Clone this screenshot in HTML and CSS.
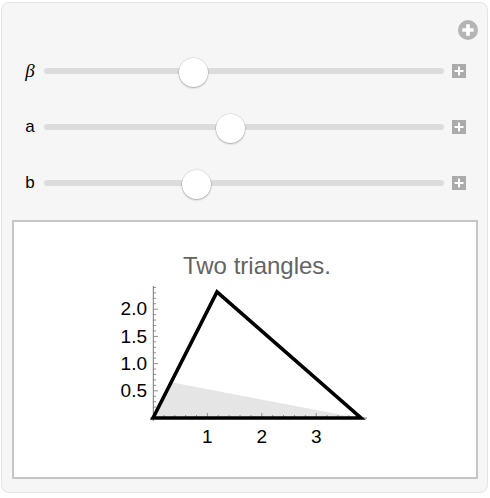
FILE: index.html
```html
<!DOCTYPE html>
<html>
<head>
<meta charset="utf-8">
<link rel="stylesheet" href="styles.css">
</head>
<body>
<div class="panel">
  <div class="top">
    <svg class="addc" width="20" height="20" viewBox="0 0 20 20"><circle cx="10" cy="10" r="10" fill="#b4b4b4"/><path d="M10 4.3V15.7M4.3 10H15.7" stroke="#fff" stroke-width="3.6"/></svg>
  </div>
  <div class="row">
    <span class="lab greek">β</span>
    <div class="track"><span class="thumb" style="left:37.25%"></span></div>
    <svg class="plus" width="14" height="14" viewBox="0 0 14 14"><rect width="14" height="14" fill="#ababab"/><path d="M7 2.5V11.5M2.5 7H11.5" stroke="#fff" stroke-width="2"/></svg>
  </div>
  <div class="row">
    <span class="lab">a</span>
    <div class="track"><span class="thumb" style="left:46.5%"></span></div>
    <svg class="plus" width="14" height="14" viewBox="0 0 14 14"><rect width="14" height="14" fill="#ababab"/><path d="M7 2.5V11.5M2.5 7H11.5" stroke="#fff" stroke-width="2"/></svg>
  </div>
  <div class="row">
    <span class="lab">b</span>
    <div class="track"><span class="thumb" style="left:38%"></span></div>
    <svg class="plus" width="14" height="14" viewBox="0 0 14 14"><rect width="14" height="14" fill="#ababab"/><path d="M7 2.5V11.5M2.5 7H11.5" stroke="#fff" stroke-width="2"/></svg>
  </div>
  <div class="plot">
    <svg class="chart" width="462" height="255" viewBox="14 222 462 255">
      <text class="title" x="257" y="273.5" text-anchor="middle">Two triangles.</text>
      <polygon points="153,418 172.5,382.5 358,418" fill="#e5e5e5"/>
      <path d="M153.3 286V421M150 418H367" stroke="#777" stroke-width="1" fill="none"/>
      <path stroke="#777" stroke-width="0.8" fill="none" d="
        M153 412.56h3M153 407.12h3M153 401.68h3M153 396.24h3M153 390.8h5
        M153 385.36h3M153 379.92h3M153 374.48h3M153 369.04h3M153 363.6h5
        M153 358.16h3M153 352.72h3M153 347.28h3M153 341.84h3M153 336.4h5
        M153 330.96h3M153 325.52h3M153 320.08h3M153 314.64h3M153 309.2h5
        M153 303.76h3M153 298.32h3M153 292.88h3M153 287.44h3
        M163.88 418v-3M174.76 418v-3M185.64 418v-3M196.52 418v-3M207.4 418v-5
        M218.28 418v-3M229.16 418v-3M240.04 418v-3M250.92 418v-3M261.8 418v-5
        M272.68 418v-3M283.56 418v-3M294.44 418v-3M305.32 418v-3M316.2 418v-5
        M327.08 418v-3M337.96 418v-3M348.84 418v-3M359.72 418v-3"/>
      <polygon points="153,418 217,292 361,418" fill="none" stroke="#000" stroke-width="3.6" stroke-linejoin="miter"/>
      <g class="tick">
        <text x="147" y="315" text-anchor="end">2.0</text>
        <text x="147" y="342.5" text-anchor="end">1.5</text>
        <text x="147" y="369.5" text-anchor="end">1.0</text>
        <text x="147" y="396.5" text-anchor="end">0.5</text>
        <text x="207.4" y="442.5" text-anchor="middle">1</text>
        <text x="261.8" y="442.5" text-anchor="middle">2</text>
        <text x="316.2" y="442.5" text-anchor="middle">3</text>
      </g>
    </svg>
  </div>
</div>
</body>
</html>
```
FILE: styles.css
```css
html, body {
  margin: 0;
  padding: 0;
  background: #ffffff;
}
body {
  font-family: "Liberation Sans", Arial, sans-serif;
}
.panel {
  margin: 2px 0 0 1px;
  width: 487px;
  height: 491px;
  box-sizing: border-box;
  border: 1px solid #e4e4e4;
  border-radius: 8px;
  background: #f6f6f6;
  display: flex;
  flex-direction: column;
}
.top {
  height: 40px;
  box-sizing: border-box;
  display: flex;
  justify-content: flex-end;
  align-items: flex-end;
  padding: 0 9px 3px 0;
}
.addc {
  display: block;
}
.row {
  height: 56px;
  display: flex;
  align-items: center;
  padding-left: 18px;
}
.lab {
  width: 20px;
  margin-right: 4px;
  text-align: center;
  font-size: 17px;
  color: #000;
  line-height: 20px;
}
.lab.greek {
  font-family: "Liberation Serif", "Times New Roman", serif;
  font-style: italic;
  font-size: 19px;
}
.track {
  position: relative;
  width: 400px;
  height: 6px;
  border-radius: 3px;
  background: #dcdcdc;
  margin-right: 8px;
}
.thumb {
  position: absolute;
  top: 50%;
  width: 29px;
  height: 29px;
  margin: -13.5px 0 0 -14.5px;
  border-radius: 50%;
  background: #ffffff;
  box-shadow: 0 1px 2px rgba(0, 0, 0, 0.28), 0 0 0 0.5px rgba(0, 0, 0, 0.12);
}
.plus {
  display: block;
}
.plot {
  margin: 9px 0 0 10px;
  width: 466px;
  height: 259px;
  box-sizing: border-box;
  border: 2px solid #c6c6c6;
  background: #ffffff;
}
.chart {
  display: block;
}
.title {
  font-family: "Liberation Sans", Arial, sans-serif;
  font-size: 24px;
  fill: #646464;
}
.tick text {
  font-family: "Liberation Sans", Arial, sans-serif;
  font-size: 19px;
  fill: #000;
}
```
